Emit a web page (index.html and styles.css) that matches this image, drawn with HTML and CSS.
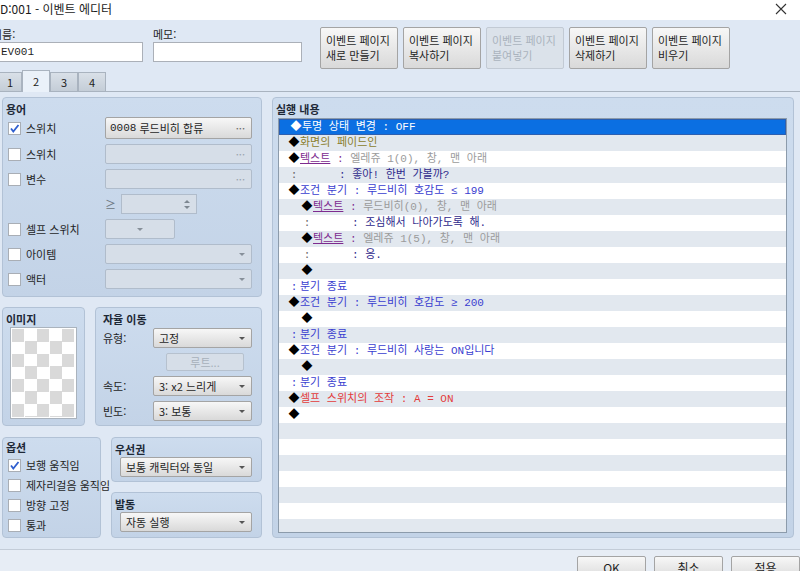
FILE: index.html
```html
<!DOCTYPE html>
<html lang="ko">
<head>
    <meta charset="UTF-8">
    <title>이벤트 에디터</title>
    <link rel="stylesheet" href="styles.css">
</head>
<body>
    <div class="titlebar">
        <span class="title">D:001 - 이벤트 에디터</span>
        <svg class="close" width="12" height="12" viewBox="0 0 12 12"><path d="M1 1L11 11M11 1L1 11" stroke="#333" stroke-width="1.1" fill="none"/></svg>
    </div>

    <div class="top">
        <div class="field name-field">
            <span class="field-label">이름:</span>
            <div class="text-input mono">EV001</div>
        </div>
        <div class="field memo-field">
            <span class="field-label">메모:</span>
            <div class="text-input"></div>
        </div>
        <div class="page-buttons">
            <button class="btn page-btn">이벤트 페이지<br>새로 만들기</button>
            <button class="btn page-btn">이벤트 페이지<br>복사하기</button>
            <button class="btn page-btn disabled">이벤트 페이지<br>붙여넣기</button>
            <button class="btn page-btn">이벤트 페이지<br>삭제하기</button>
            <button class="btn page-btn">이벤트 페이지<br>비우기</button>
        </div>
    </div>

    <div class="tabs">
        <div class="tab first">1</div>
        <div class="tab active">2</div>
        <div class="tab">3</div>
        <div class="tab">4</div>
    </div>

    <div class="content">
        <div class="left-col">
            <section class="group cond">
                <h3>용어</h3>
                <div class="cond-grid">
                    <label class="check"><span class="box"><svg width="11" height="11" viewBox="0 0 11 11"><path d="M2 5.5L4.3 8.5L9.5 2" stroke="#2f5fcf" stroke-width="1.8" fill="none"/></svg></span>스위치</label>
                    <div class="btn pick"><span class="mono">0008</span>&nbsp;루드비히 합류<span class="dots">···</span></div>

                    <label class="check"><span class="box"></span>스위치</label>
                    <div class="pick off"><span class="dots">···</span></div>

                    <label class="check"><span class="box"></span>변수</label>
                    <div class="pick off"><span class="dots">···</span></div>

                    <span></span>
                    <div class="spin-line">
                        <span class="ge">≥</span>
                        <div class="spin"><span class="up"></span><span class="down"></span></div>
                    </div>

                    <label class="check"><span class="box"></span>셀프 스위치</label>
                    <div class="combo off short"><span class="arrow"></span></div>

                    <label class="check"><span class="box"></span>아이템</label>
                    <div class="combo off"><span></span><span class="arrow"></span></div>

                    <label class="check"><span class="box"></span>액터</label>
                    <div class="combo off"><span></span><span class="arrow"></span></div>
                </div>
            </section>

            <div class="row-2">
                <section class="group image">
                    <h3>이미지</h3>
                    <div class="image-frame"><div class="checker"></div></div>
                </section>
                <section class="group move">
                    <h3>자율 이동</h3>
                    <div class="move-grid">
                        <span class="move-label">유형:</span>
                        <div class="btn combo"><span>고정</span><span class="arrow"></span></div>
                        <span></span>
                        <div class="route">루트...</div>
                        <span class="move-label">속도:</span>
                        <div class="btn combo"><span>3: x2 느리게</span><span class="arrow"></span></div>
                        <span class="move-label">빈도:</span>
                        <div class="btn combo"><span>3: 보통</span><span class="arrow"></span></div>
                    </div>
                </section>
            </div>

            <div class="row-3">
                <section class="group options">
                    <h3>옵션</h3>
                    <div class="opt-list">
                        <label class="check"><span class="box"><svg width="11" height="11" viewBox="0 0 11 11"><path d="M2 5.5L4.3 8.5L9.5 2" stroke="#2f5fcf" stroke-width="1.8" fill="none"/></svg></span>보행 움직임</label>
                        <label class="check"><span class="box"></span>제자리걸음 움직임</label>
                        <label class="check"><span class="box"></span>방향 고정</label>
                        <label class="check"><span class="box"></span>통과</label>
                    </div>
                </section>
                <div class="stack">
                    <section class="group priority">
                        <h3>우선권</h3>
                        <div class="btn combo wide"><span>보통 캐릭터와 동일</span><span class="arrow"></span></div>
                    </section>
                    <section class="group trigger">
                        <h3>발동</h3>
                        <div class="btn combo wide"><span>자동 실행</span><span class="arrow"></span></div>
                    </section>
                </div>
            </div>
        </div>

        <section class="group commands">
            <h3>실행 내용</h3>
            <div class="cmd-list mono">
                <div class="cmd sel"><span class="mk">◆</span>투명 상태 변경 : OFF</div>
                <div class="cmd"><span class="mk">◆</span><span class="c-fade">화면의 페이드인</span></div>
                <div class="cmd"><span class="mk">◆</span><span class="c-text"><span class="ul">텍스트</span> :</span><span class="c-param"> 엘레쥬 1(0), 창, 맨 아래</span></div>
                <div class="cmd"><span class="mk dim">:</span><span class="gap"></span><span class="c-msg">: 좋아! 한번 가볼까?</span></div>
                <div class="cmd c-cond"><span class="mk">◆</span>조건 분기 : 루드비히 호감도 ≤ 199</div>
                <div class="cmd lvl1"><span class="mk">◆</span><span class="c-text"><span class="ul">텍스트</span> :</span><span class="c-param"> 루드비히(0), 창, 맨 아래</span></div>
                <div class="cmd lvl1"><span class="mk dim">:</span><span class="gap"></span><span class="c-msg">: 조심해서 나아가도록 해.</span></div>
                <div class="cmd lvl1"><span class="mk">◆</span><span class="c-text"><span class="ul">텍스트</span> :</span><span class="c-param"> 엘레쥬 1(5), 창, 맨 아래</span></div>
                <div class="cmd lvl1"><span class="mk dim">:</span><span class="gap"></span><span class="c-msg">: 응.</span></div>
                <div class="cmd lvl1"><span class="mk">◆</span></div>
                <div class="cmd c-cond"><span class="mk end">:</span>분기 종료</div>
                <div class="cmd c-cond"><span class="mk">◆</span>조건 분기 : 루드비히 호감도 ≥ 200</div>
                <div class="cmd lvl1"><span class="mk">◆</span></div>
                <div class="cmd c-cond"><span class="mk end">:</span>분기 종료</div>
                <div class="cmd c-cond"><span class="mk">◆</span>조건 분기 : 루드비히 사랑는 ON입니다</div>
                <div class="cmd lvl1"><span class="mk">◆</span></div>
                <div class="cmd c-cond"><span class="mk end">:</span>분기 종료</div>
                <div class="cmd c-red"><span class="mk">◆</span>셀프 스위치의 조작 : A = ON</div>
                <div class="cmd"><span class="mk">◆</span></div>
                <div class="cmd"></div>
                <div class="cmd"></div>
                <div class="cmd"></div>
                <div class="cmd"></div>
                <div class="cmd"></div>
                <div class="cmd"></div>
                <div class="cmd"></div>
            </div>
        </section>
    </div>

    <div class="footer">
        <button class="btn dlg-btn">OK</button>
        <button class="btn dlg-btn">취소</button>
        <button class="btn dlg-btn">적용</button>
    </div>
</body>
</html>
```

FILE: styles.css
```css
* {
    box-sizing: border-box;
}

body {
    margin: 0;
    width: 800px;
    height: 571px;
    overflow: hidden;
    background-color: #dfe8f4;
    font-family: "Noto Sans CJK KR", "Noto Sans", sans-serif;
    font-size: 11px;
    color: #1f1f1f;
}

.mono {
    font-family: "Liberation Mono", "Noto Sans CJK KR", monospace;
}

/* title bar */
.titlebar {
    height: 20px;
    background-color: #fff;
    display: flex;
    justify-content: space-between;
}

.title {
    margin-left: 0;
    font-size: 12px;
    line-height: 18px;
    color: #1a1a1a;
}

.close {
    margin: 3px 13px 0 0;
}

/* name / memo / page buttons */
.top {
    height: 50px;
    display: flex;
    padding-top: 7px;
}

.field {
    display: flex;
    flex-direction: column;
}

.field-label {
    height: 15px;
    line-height: 15px;
}

.name-field {
    width: 146px;
    margin-left: -3px;
}

.name-field .field-label {
    margin-left: -5px;
}

.memo-field {
    width: 149px;
    margin-left: 10px;
}

.text-input {
    height: 20px;
    background-color: #fff;
    border: 1px solid #abb0b8;
    padding-left: 3px;
    line-height: 18px;
}

.btn {
    margin: 0;
    font: inherit;
    color: inherit;
    background: linear-gradient(#f7f7f7, #d9d9d9);
    border: 1px solid #a4a4a4;
    border-radius: 2px;
}

.page-buttons {
    display: flex;
    gap: 5px;
    margin-left: 18px;
}

.page-btn {
    width: 78px;
    height: 42px;
    padding: 0 5px;
    text-align: left;
    line-height: 15px;
}

.page-btn.disabled {
    background: #dbe2ea;
    border-color: #c2cad4;
    color: #aab3bd;
}

/* tabs */
.tabs {
    height: 22px;
    display: flex;
    align-items: flex-end;
    border-bottom: 1px solid #a9b3bf;
}

.tab {
    width: 28px;
    height: 19px;
    padding-left: 10px;
    line-height: 18px;
    background: linear-gradient(#d9e0e8, #c4cdd7);
    border: 1px solid #a9b3bf;
    border-bottom: none;
    color: #222;
}

.tab.first {
    width: 27px;
    margin-left: -5px;
    padding-left: 11px;
}

.tab.active {
    height: 22px;
    margin-bottom: -1px;
    line-height: 20px;
    background: #eaf1f9;
}

/* main area */
.content {
    height: 457px;
    display: flex;
    gap: 10px;
    padding: 5px 6px 0 2px;
}

.left-col {
    width: 260px;
    display: flex;
    flex-direction: column;
}

.group {
    background: linear-gradient(#cddcee, #c3d3e7);
    border: 1px solid #b2c2d6;
    border-radius: 4px;
    padding: 3px 9px 0 3px;
}

.group h3 {
    margin: 0;
    font-size: 11px;
    font-weight: bold;
    line-height: 16px;
    color: #1d2836;
}

.cond {
    height: 200px;
}

.cond-grid {
    display: grid;
    grid-template-columns: 99px 147px;
    grid-template-rows: 22px repeat(6, 20px);
    row-gap: 5px;
}

.check {
    display: flex;
    align-items: center;
    gap: 5px;
    padding-left: 2px;
    white-space: nowrap;
}

.box {
    width: 13px;
    height: 13px;
    flex: none;
    display: flex;
    align-items: center;
    justify-content: center;
    background-color: #fff;
    border: 1px solid #a9aeb5;
}

.pick {
    display: flex;
    align-items: center;
    padding: 0 6px 0 4px;
}

.pick .dots {
    margin-left: auto;
    color: #666;
}

.pick.off {
    background-color: #d6dee8;
    border: 1px solid #b0bccb;
    border-radius: 2px;
}

.pick.off .dots {
    color: #98a2ad;
}

.spin-line {
    display: flex;
    align-items: center;
}

.ge {
    width: 16px;
    color: #6b7580;
}

.spin {
    width: 76px;
    height: 20px;
    background-color: #d6dee8;
    border: 1px solid #b0bccb;
    display: flex;
    flex-direction: column;
    align-items: flex-end;
    justify-content: center;
    gap: 3px;
    padding-right: 6px;
}

.up {
    border-left: 3px solid transparent;
    border-right: 3px solid transparent;
    border-bottom: 3px solid #7d8791;
}

.down {
    border-left: 3px solid transparent;
    border-right: 3px solid transparent;
    border-top: 3px solid #7d8791;
}

.combo {
    height: 20px;
    display: flex;
    align-items: center;
    justify-content: space-between;
    padding: 0 6px 0 5px;
    white-space: nowrap;
}

.combo.off {
    background-color: #d6dee8;
    border: 1px solid #b0bccb;
    border-radius: 2px;
}

.combo.short {
    width: 70px;
    justify-content: center;
}

.arrow {
    border-left: 3px solid transparent;
    border-right: 3px solid transparent;
    border-top: 3px solid #555;
}

.combo.off .arrow {
    border-top-color: #87909a;
}

.combo.wide {
    width: 132px;
    margin-left: 5px;
}

.row-2 {
    height: 119px;
    margin-top: 10px;
    display: flex;
    gap: 10px;
}

.image {
    width: 83px;
}

.image-frame {
    width: 67px;
    height: 92px;
    margin-left: 4px;
    padding: 1px;
    background-color: #fff;
    border: 1px solid #aab3bd;
}

.checker {
    height: 100%;
    background: conic-gradient(#fff 25%, #d9d9d9 0 50%, #fff 0 75%, #d9d9d9 0);
    background-size: 25px 25px;
}

.move {
    width: 167px;
    padding-left: 7px;
}

.move-grid {
    display: grid;
    grid-template-columns: 50px 99px;
    grid-template-rows: 20px 18px 20px 20px;
    row-gap: 5px;
    margin-top: 1px;
}

.move-label {
    line-height: 20px;
}

.route {
    width: 78px;
    margin-left: 13px;
    background-color: #d6dee8;
    border: 1px solid #b6c1ce;
    border-radius: 2px;
    text-align: center;
    line-height: 16px;
    color: #a7b0ba;
}

.row-3 {
    height: 101px;
    margin-top: 11px;
    display: flex;
    gap: 10px;
}

.options {
    width: 99px;
    padding-top: 1px;
}

.opt-list .check {
    height: 20px;
}

.stack {
    width: 151px;
    display: flex;
    flex-direction: column;
    gap: 10px;
}

.priority {
    height: 45px;
}

.trigger {
    height: 46px;
}

/* command list */
.commands {
    flex: 1;
    height: 441px;
    padding-right: 6px;
}

.cmd-list {
    height: 415px;
    margin: 1px 0 0 2px;
    background-color: #fff;
    border: 1px solid #8c9bab;
    overflow: hidden;
    font-size: 11px;
}

.cmd {
    height: 16px;
    line-height: 16px;
    padding-left: 9px;
    white-space: nowrap;
    color: #222;
}

.cmd:nth-child(even) {
    background-color: #e2e8ef;
}

.cmd.lvl1 {
    padding-left: 22px;
}

.cmd.sel {
    padding-left: 11px;
    background-color: #0b6fe2;
    box-shadow: inset 0 0 0 1px #2c5fb0;
    color: #fff;
}

.mk {
    display: inline-block;
    width: 12px;
    text-align: center;
    color: #000;
}

.sel .mk {
    color: #fff;
}

.mk.dim {
    color: #666;
}

.mk.end {
    color: inherit;
}

.gap {
    display: inline-block;
    width: 39px;
}

.c-fade {
    color: #8a7e2e;
}

.c-text {
    color: #7d2b8f;
}

.ul {
    text-decoration: underline;
}

.c-param {
    color: #9b9b9b;
}

.c-msg {
    color: #2f2a8c;
}

.c-cond {
    color: #3a3ed0;
}

.c-red {
    color: #e33b3b;
}

/* dialog buttons */
.footer {
    height: 22px;
    display: flex;
    justify-content: flex-end;
    gap: 8px;
    padding-top: 6px;
    background-color: #e7edf5;
    border-top: 1px solid #c3ccd8;
}

.dlg-btn {
    width: 69px;
    height: 24px;
    flex: none;
    padding: 0;
    font-size: 12px;
    line-height: 20px;
}
```
